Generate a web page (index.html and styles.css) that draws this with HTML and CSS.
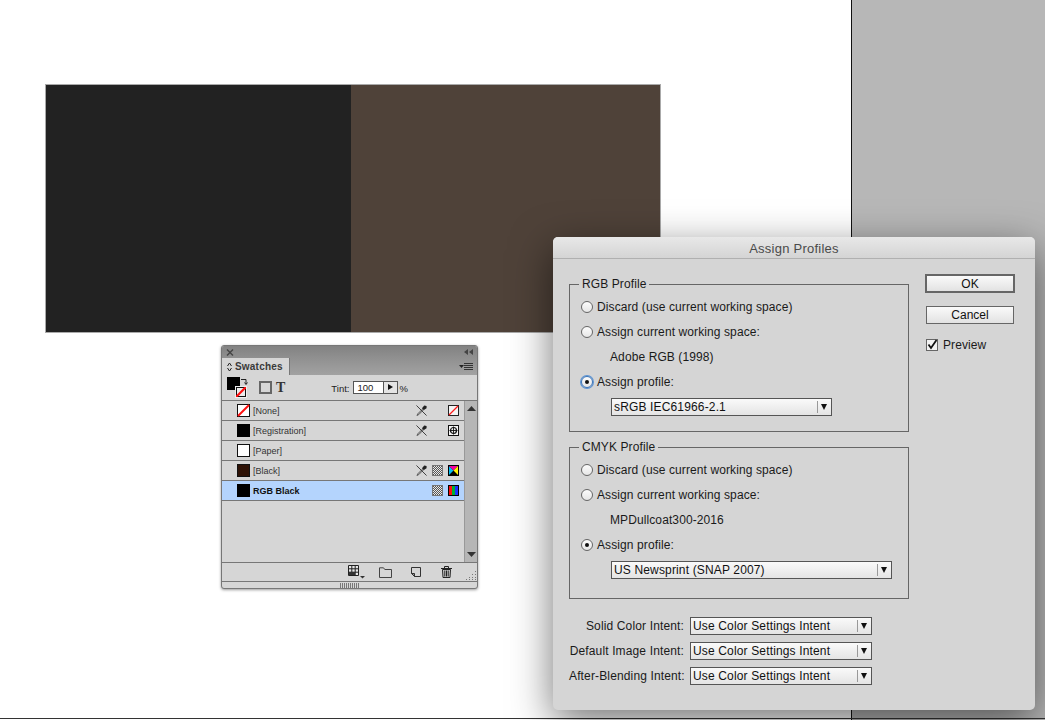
FILE: index.html
```html
<!DOCTYPE html>
<html lang="en">
<head>
  <meta charset="UTF-8">
  <title>Assign Profiles</title>
  <link rel="stylesheet" href="styles.css">
</head>
<body>
  <svg class="defs" width="0" height="0">
    <defs>
      <pattern id="check" width="2" height="2" patternUnits="userSpaceOnUse">
        <rect width="2" height="2" fill="#e8e8e8"/>
        <rect width="1" height="1" fill="#555"/>
        <rect x="1" y="1" width="1" height="1" fill="#555"/>
      </pattern>
      <symbol id="no-edit" viewBox="0 0 12 12">
        <path d="M7.5 4 L2 9.5 L1 11.5 L3 10.5 L8.5 5" fill="#aaa" stroke="#444" stroke-width=".8"/>
        <path d="M6.5 3.5 L9 .5 L11.5 1 L11.5 3.5 L8.5 5.5 Z" fill="#222"/>
        <path d="M.5 .5 L11.5 11.5" stroke="#333" stroke-width="1"/>
      </symbol>
      <symbol id="tag-check" viewBox="0 0 11 11">
        <rect x=".5" y=".5" width="10" height="10" fill="url(#check)" stroke="#777"/>
      </symbol>
      <symbol id="tag-none" viewBox="0 0 11 11">
        <rect x=".5" y=".5" width="10" height="10" fill="#f4f4f4" stroke="#222"/>
        <path d="M1 10 L10 1" stroke="#ff1c1c" stroke-width="1.2"/>
      </symbol>
      <symbol id="tag-reg" viewBox="0 0 11 11">
        <rect x=".5" y=".5" width="10" height="10" fill="#f4f4f4" stroke="#111"/>
        <circle cx="5.5" cy="5.5" r="3" fill="none" stroke="#111" stroke-width="1.2"/>
        <path d="M5.5 1.5 V9.5 M1.5 5.5 H9.5" stroke="#111" stroke-width=".9"/>
      </symbol>
      <symbol id="tag-cmyk" viewBox="0 0 11 11">
        <rect width="11" height="11" fill="#000"/>
        <path d="M1 1 L5.5 5.5 L1 10 Z" fill="#00c0f5"/>
        <path d="M1 1 H10 L5.5 5.5 Z" fill="#f000a0"/>
        <path d="M10 1 V10 L5.5 5.5 Z" fill="#fff200"/>
      </symbol>
      <symbol id="tag-rgb" viewBox="0 0 11 11">
        <rect width="11" height="11" fill="#000"/>
        <rect x="1" y="1" width="3" height="9" fill="#ff0f0f"/>
        <rect x="4" y="1" width="3" height="9" fill="#00b030"/>
        <rect x="7" y="1" width="3" height="9" fill="#1c30ff"/>
      </symbol>
    </defs>
  </svg>

  <div class="pasteboard"></div>
  <div class="bottom-line"></div>

  <div class="artwork">
    <div class="art-black"></div>
    <div class="art-brown"></div>
  </div>

  <!-- Swatches panel -->
  <div class="panel">
    <div class="panel-top">
      <svg class="panel-x" width="8" height="7" viewBox="0 0 8 7"><path d="M1 .5 L7 6.5 M7 .5 L1 6.5" stroke="#444" stroke-width="1.4"/></svg>
      <svg class="panel-collapse" width="9" height="6" viewBox="0 0 9 6"><path d="M4 0 V6 L0 3 Z M9 0 V6 L5 3 Z" fill="#444"/></svg>
    </div>
    <div class="panel-tabs">
      <div class="tab">
        <svg width="5" height="10" viewBox="0 0 5 10"><path d="M.5 4 L2.5 1 L4.5 4 M.5 6 L2.5 9 L4.5 6" fill="none" stroke="#222"/></svg>
        Swatches
      </div>
      <svg class="panel-menu" width="14" height="8" viewBox="0 0 14 8"><path d="M0 2 H5 L2.5 5 Z" fill="#222"/><path d="M5 .5 H14 M5 2.5 H14 M5 4.5 H14 M5 6.5 H14" stroke="#333"/></svg>
    </div>
    <div class="panel-tools">
      <div class="fill-stroke">
        <div class="fill-box"></div>
        <svg class="stroke-box" width="10" height="10" viewBox="0 0 10 10"><rect x=".5" y=".5" width="9" height="9" fill="#eee" stroke="#111" stroke-width="1"/><path d="M0 10 L10 0" stroke="#ff1010" stroke-width="2.2"/></svg>
        <svg class="swap" width="7" height="8" viewBox="0 0 7 8"><path d="M0 1.5 H5 V6 M3.5 4.5 L5 6.5 L6.5 4.5" fill="none" stroke="#222"/></svg>
      </div>
      <div class="frame-icon"><span></span></div>
      <span class="t-icon">T</span>
      <label class="tint">Tint:</label>
      <div class="tint-field"><span class="tint-val">100</span><span class="tint-btn"></span></div>
      <span class="tint-pct">%</span>
    </div>
    <div class="panel-body">
      <ul class="swatch-list">
        <li class="swatch">
          <svg class="chip" width="13" height="13" viewBox="0 0 13 13"><rect x=".5" y=".5" width="12" height="12" fill="#fff" stroke="#111"/><path d="M1 12 L12 1" stroke="#ff1010" stroke-width="2"/></svg>
          <span class="swatch-name">[None]</span>
          <span class="tags">
            <svg class="tag"><use href="#no-edit"/></svg><span class="tag"></span><svg class="tag"><use href="#tag-none"/></svg>
          </span>
        </li>
        <li class="swatch">
          <span class="chip chip-black"></span>
          <span class="swatch-name">[Registration]</span>
          <span class="tags">
            <svg class="tag"><use href="#no-edit"/></svg><span class="tag"></span><svg class="tag"><use href="#tag-reg"/></svg>
          </span>
        </li>
        <li class="swatch">
          <span class="chip chip-paper"></span>
          <span class="swatch-name">[Paper]</span>
        </li>
        <li class="swatch">
          <span class="chip chip-brown"></span>
          <span class="swatch-name">[Black]</span>
          <span class="tags">
            <svg class="tag"><use href="#no-edit"/></svg><svg class="tag"><use href="#tag-check"/></svg><svg class="tag"><use href="#tag-cmyk"/></svg>
          </span>
        </li>
        <li class="swatch selected">
          <span class="chip chip-black"></span>
          <span class="swatch-name">RGB Black</span>
          <span class="tags">
            <svg class="tag"><use href="#tag-check"/></svg><svg class="tag"><use href="#tag-rgb"/></svg>
          </span>
        </li>
      </ul>
      <div class="scrollbar">
        <svg width="9" height="5" viewBox="0 0 9 5"><path d="M4.5 0 L9 5 H0 Z" fill="#333"/></svg>
        <svg width="9" height="5" viewBox="0 0 9 5"><path d="M0 0 H9 L4.5 5 Z" fill="#333"/></svg>
      </div>
    </div>
    <div class="panel-footer">
      <svg class="foot-grid" width="17" height="14" viewBox="0 0 17 14"><path d="M.5 .5 H10.5 V10.5 H.5 Z M3.8 .5 V10.5 M7.2 .5 V10.5 M.5 3.8 H10.5 M.5 7.2 H10.5" fill="#e8e8e8" stroke="#222"/><rect x="1" y="7" width="6" height="3" fill="#333"/><path d="M12 11 H17 L14.5 13.5 Z" fill="#333"/></svg>
      <svg class="foot-folder" width="13" height="11" viewBox="0 0 13 11"><path d="M.5 10.5 V.8 H4.5 L5.8 2.5 H12.5 V10.5 Z" fill="#d6d6d6" stroke="#444"/></svg>
      <svg class="foot-new" width="10" height="10" viewBox="0 0 10 10"><path d="M.5 .5 H9.5 V9.5 H3.5 L.5 6.5 Z" fill="#d6d6d6" stroke="#333"/><path d="M.5 6.5 H3.5 V9.5 Z" fill="#999" stroke="#333"/></svg>
      <svg class="foot-trash" width="11" height="12" viewBox="0 0 11 12"><path d="M0 2.5 H11 M3.5 2 V.5 H7.5 V2" fill="none" stroke="#222"/><path d="M1.5 3.5 H9.5 L9 11.5 H2 Z" fill="#ccc" stroke="#222"/><path d="M3.8 4.5 V10.5 M5.5 4.5 V10.5 M7.2 4.5 V10.5" stroke="#222"/></svg>
      <svg class="foot-grip" width="10" height="10" viewBox="0 0 10 10"><path d="M9 1 h1 v1 h-1z M6 4 h1 v1 h-1z M9 4 h1 v1 h-1z M3 7 h1 v1 h-1z M6 7 h1 v1 h-1z M9 7 h1 v1 h-1z M0 9 h1 v1 h-1z M3 9 h1 v1 h-1z M6 9 h1 v1 h-1z M9 9 h1 v1 h-1z" fill="#777"/></svg>
    </div>
    <div class="panel-bottom"><span class="grip-lines"></span></div>
  </div>

  <!-- Assign Profiles dialog -->
  <div class="dialog">
    <div class="dialog-title">Assign Profiles</div>
    <div class="dialog-body">
      <div class="dialog-main">
        <fieldset class="group group-rgb">
          <legend>RGB Profile</legend>
          <div class="opt"><span class="radio"></span>Discard (use current working space)</div>
          <div class="opt"><span class="radio"></span>Assign current working space:</div>
          <div class="opt opt-value">Adobe RGB (1998)</div>
          <div class="opt"><span class="radio on focus"></span>Assign profile:</div>
          <div class="opt opt-select">
            <div class="select select-short"><span class="select-text">sRGB IEC61966-2.1</span><span class="arrow"></span></div>
          </div>
        </fieldset>
        <fieldset class="group group-cmyk">
          <legend>CMYK Profile</legend>
          <div class="opt"><span class="radio"></span>Discard (use current working space)</div>
          <div class="opt"><span class="radio"></span>Assign current working space:</div>
          <div class="opt opt-value">MPDullcoat300-2016</div>
          <div class="opt"><span class="radio on"></span>Assign profile:</div>
          <div class="opt opt-select">
            <div class="select select-long"><span class="select-text">US Newsprint (SNAP 2007)</span><span class="arrow"></span></div>
          </div>
        </fieldset>
        <div class="intents">
          <span class="intent-label">Solid Color Intent:</span>
          <div class="select"><span class="select-text">Use Color Settings Intent</span><span class="arrow"></span></div>
          <span class="intent-label">Default Image Intent:</span>
          <div class="select"><span class="select-text">Use Color Settings Intent</span><span class="arrow"></span></div>
          <span class="intent-label">After-Blending Intent:</span>
          <div class="select"><span class="select-text">Use Color Settings Intent</span><span class="arrow"></span></div>
        </div>
      </div>
      <div class="dialog-side">
        <button class="btn btn-default">OK</button>
        <button class="btn">Cancel</button>
        <div class="check-row">
          <svg class="check" width="12" height="12" viewBox="0 0 12 12"><rect x=".5" y=".5" width="11" height="11" fill="#f2f2f2" stroke="#666"/><path d="M2.5 5.5 L5 9 L10.5 1" fill="none" stroke="#111" stroke-width="1.8"/></svg>
          Preview
        </div>
      </div>
    </div>
  </div>
</body>
</html>
```

FILE: styles.css
```css
/* page / document */
html, body {
  margin: 0;
  height: 720px;
  overflow: hidden;
}

body {
  position: relative;
  background-color: #fff;
  font-family: 'Liberation Sans', Arial, sans-serif;
  color: #111;
}

.defs {
  position: absolute;
}

.pasteboard {
  position: absolute;
  left: 851px;
  top: 0;
  right: 0;
  bottom: 0;
  background-color: #b7b7b7;
  border-left: 1px solid #111;
}

.bottom-line {
  position: absolute;
  left: 0;
  right: 0;
  top: 718px;
  height: 1px;
  background-color: #333;
}

.artwork {
  position: absolute;
  left: 46px;
  top: 85px;
  display: flex;
  height: 247px;
  box-shadow: 0 0 0 1px #aaa;
}

.art-black {
  width: 305px;
  background-color: #222;
}

.art-brown {
  width: 309px;
  background-color: #4f4239;
}

/* swatches panel */
.panel {
  position: absolute;
  left: 221px;
  top: 345px;
  width: 255px;
  height: 242px;
  display: flex;
  flex-direction: column;
  background-color: #d6d6d6;
  border: 1px solid #777;
  border-radius: 3px;
  box-shadow: 0 1px 3px rgba(0, 0, 0, 0.4);
}

.panel-top {
  display: flex;
  justify-content: space-between;
  align-items: center;
  height: 12px;
  padding: 0 4px 0 4px;
  background: linear-gradient(#828282, #909090);
  border-radius: 2px 2px 0 0;
}

.panel-tabs {
  display: flex;
  justify-content: space-between;
  align-items: center;
  height: 17px;
  padding-right: 4px;
  background: linear-gradient(#909090, #a2a2a2);
}

.tab {
  display: flex;
  align-items: center;
  gap: 3px;
  box-sizing: border-box;
  width: 68px;
  height: 17px;
  padding-left: 5px;
  background-color: #d6d6d6;
  border-right: 1px solid #777;
  font-size: 10px;
  font-weight: bold;
  letter-spacing: 0.2px;
  color: #3a3a3a;
}

.panel-tools {
  display: flex;
  align-items: center;
  height: 25px;
  border-bottom: 1px solid #777;
  font-size: 9.5px;
  color: #222;
}

.fill-stroke {
  position: relative;
  width: 21px;
  height: 21px;
  margin-left: 5px;
}

.fill-box {
  position: absolute;
  left: 0;
  top: 0;
  width: 13px;
  height: 13px;
  background-color: #000;
}

.stroke-box {
  position: absolute;
  left: 9px;
  top: 10px;
  outline: 1px solid #eee;
}

.swap {
  position: absolute;
  left: 14px;
  top: 1px;
}

.frame-icon {
  box-sizing: border-box;
  width: 13px;
  height: 13px;
  margin-left: 11px;
  padding: 2px;
  background-color: #666;
}

.frame-icon span {
  display: block;
  width: 100%;
  height: 100%;
  background-color: #d6d6d6;
}

.t-icon {
  margin-left: 4px;
  font-family: 'Liberation Serif', serif;
  font-weight: bold;
  font-size: 14px;
  color: #333;
}

.tint {
  margin-left: 46px;
  padding-top: 1px;
}

.tint-field {
  display: flex;
  box-sizing: border-box;
  width: 45px;
  height: 13px;
  margin-left: 4px;
  border: 1px solid #555;
  background-color: #fff;
}

.tint-val {
  flex: 1;
  padding-left: 3px;
  line-height: 11px;
}

.tint-btn {
  position: relative;
  width: 13px;
  background-color: #e4e4e4;
  border-left: 1px solid #555;
}

.tint-btn::after {
  content: "";
  position: absolute;
  left: 4px;
  top: 2px;
  border-left: 5px solid #111;
  border-top: 3.5px solid transparent;
  border-bottom: 3.5px solid transparent;
}

.tint-pct {
  margin-left: 1px;
  padding-top: 1px;
}

.panel-body {
  display: flex;
  flex: 1;
  min-height: 0;
  border-bottom: 1px solid #777;
}

.swatch-list {
  flex: 1;
  margin: 0;
  padding: 0;
  list-style: none;
}

.swatch {
  display: flex;
  align-items: center;
  box-sizing: border-box;
  height: 20px;
  padding: 0 5px 0 15px;
  border-bottom: 1px solid #777;
  font-size: 9px;
  color: #333;
}

.swatch.selected {
  background-color: #b4d4fd;
  font-weight: bold;
  color: #111;
}

.chip {
  display: block;
  box-sizing: border-box;
  width: 13px;
  height: 13px;
  margin-right: 3px;
  flex: none;
}

.chip-black {
  background-color: #000;
}

.chip-paper {
  background-color: #fff;
  border: 1px solid #111;
}

.chip-brown {
  background-color: #2e1206;
  border: 1px solid #111;
}

.swatch-name {
  flex: 1;
}

.tags {
  display: flex;
  gap: 5px;
}

.tag {
  display: block;
  width: 11px;
  height: 11px;
}

.scrollbar {
  display: flex;
  flex-direction: column;
  justify-content: space-between;
  align-items: center;
  box-sizing: border-box;
  width: 13px;
  padding: 5px 0;
  background-color: #b6b6b6;
  border-left: 1px solid #999;
}

.panel-footer {
  display: flex;
  align-items: center;
  height: 18px;
  padding-left: 126px;
  border-bottom: 1px solid #777;
}

.foot-folder {
  margin-left: 14px;
}

.foot-new {
  margin-left: 19px;
}

.foot-trash {
  margin-left: 20px;
}

.foot-grip {
  margin-left: 14px;
  margin-top: 6px;
}

.panel-bottom {
  display: flex;
  height: 6px;
  justify-content: center;
  align-items: center;
}

.grip-lines {
  width: 20px;
  height: 5px;
  background: repeating-linear-gradient(90deg, #777 0 1px, transparent 1px 2px);
}

/* assign profiles dialog */
.dialog {
  position: absolute;
  left: 553px;
  top: 237px;
  box-sizing: border-box;
  width: 482px;
  height: 473px;
  background-color: #d5d5d5;
  border-radius: 5px;
  box-shadow: 0 12px 42px rgba(0, 0, 0, 0.55);
  font-size: 12px;
  letter-spacing: 0.1px;
  color: #1a1a1a;
}

.dialog-title {
  height: 21px;
  line-height: 23px;
  text-align: center;
  font-size: 13px;
  letter-spacing: 0.25px;
  color: #4a4a4a;
  background: linear-gradient(#e8e8e8, #d4d4d4);
  border-bottom: 1px solid #b0b0b0;
  border-radius: 5px 5px 0 0;
}

.dialog-body {
  display: flex;
  padding: 18px 0 0 16px;
}

.dialog-main {
  width: 340px;
}

.group {
  box-sizing: border-box;
  width: 340px;
  margin: 0;
  padding: 2px 0 0 10px;
  border: 1px solid #666;
}

.group-rgb {
  height: 155px;
}

.group-cmyk {
  height: 159px;
  margin-top: 8px;
}

.group legend {
  margin-left: -1px;
  padding: 0 3px 0 3px;
  font-size: 12px;
  line-height: 15px;
}

.opt {
  display: flex;
  align-items: center;
  gap: 4px;
  height: 25px;
}

.opt-value {
  padding-left: 30px;
}

.opt-select {
  padding-left: 31px;
}

.radio {
  position: relative;
  box-sizing: border-box;
  width: 12px;
  height: 12px;
  margin-left: 1px;
  border: 1px solid #666;
  border-radius: 50%;
  background: linear-gradient(#fcfcfc, #e6e6e6);
}

.radio.on::after {
  content: "";
  position: absolute;
  left: 3px;
  top: 3px;
  width: 4px;
  height: 4px;
  border-radius: 50%;
  background-color: #111;
}

.radio.focus {
  border-color: #3a73b8;
  box-shadow: 0 0 0 1px #5b93d3;
}

.select {
  display: flex;
  align-items: center;
  box-sizing: border-box;
  height: 18px;
  border: 1px solid #555;
  background: linear-gradient(#fafafa, #e4e4e4);
  font-size: 12px;
  letter-spacing: 0.15px;
  color: #111;
}

.select-short {
  width: 221px;
}

.select-long {
  width: 281px;
}

.select-text {
  flex: 1;
  padding-left: 2px;
}

.arrow {
  position: relative;
  width: 13px;
  height: 12px;
  border-left: 1px solid #999;
}

.arrow::after {
  content: "";
  position: absolute;
  left: 3px;
  top: 3px;
  border-top: 6px solid #111;
  border-left: 3.5px solid transparent;
  border-right: 3.5px solid transparent;
}

.intents {
  display: grid;
  grid-template-columns: 121px 182px;
  row-gap: 7px;
  align-items: center;
  margin-top: 18px;
}

.intent-label {
  padding-right: 6px;
  text-align: right;
  white-space: nowrap;
  letter-spacing: 0.14px;
}

.dialog-side {
  display: flex;
  flex-direction: column;
  align-items: flex-start;
  margin: -3px 0 0 16px;
}

.btn {
  box-sizing: border-box;
  width: 88px;
  height: 18px;
  margin: 1px 0 12px 1px;
  padding: 0;
  border: 1px solid #666;
  background: linear-gradient(#fafafa, #e2e2e2);
  font-family: inherit;
  font-size: 12px;
  color: #111;
}

.btn-default {
  width: 90px;
  height: 19px;
  margin: 0 0 12px 0;
  border: 2px solid #666;
}

.check-row {
  display: flex;
  align-items: center;
  gap: 5px;
  margin: 2px 0 0 1px;
}
```
